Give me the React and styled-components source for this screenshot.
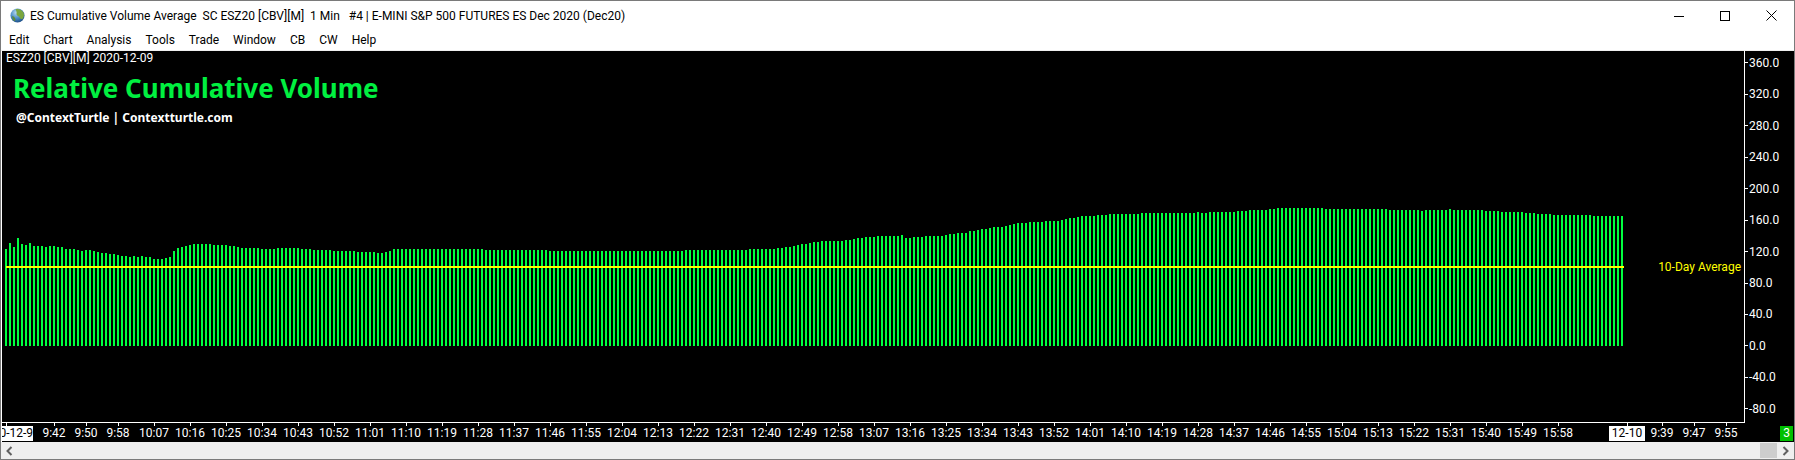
import React from "react";
import styled, { createGlobalStyle } from "styled-components";

const GlobalStyle = createGlobalStyle`
  body {
    margin: 0;
    background: #fff;
    overflow: hidden;
  }
`;

const UI_FONT = `Roboto, "Noto Sans", sans-serif`;
const BOLD_FONT = `"Noto Sans", "Open Sans", sans-serif`;

// bar tops in page pixels, one bar per minute, written as [count, top]
const TOP_RUNS = [
  [1, 249], [1, 243], [1, 247], [1, 238], [1, 244], [1, 245], [1, 243], [3, 246], [1, 247], [2, 246],
  [2, 247], [3, 249], [1, 250], [1, 251], [2, 250], [1, 251], [1, 252], [2, 253], [2, 254], [1, 255],
  [2, 256], [1, 257], [1, 256], [1, 257], [1, 256], [2, 257], [3, 259], [1, 258], [1, 257], [1, 251],
  [1, 248], [1, 247], [1, 246], [1, 245], [5, 244], [4, 245], [2, 246], [1, 247], [5, 248], [4, 249],
  [6, 248], [3, 249], [5, 250], [6, 251], [5, 252], [2, 253], [1, 252], [1, 251], [23, 249], [16, 250],
  [34, 251], [16, 250], [7, 249], [2, 248], [2, 247], [1, 246], [1, 245], [2, 244], [1, 243], [2, 242],
  [6, 241], [2, 240], [1, 239], [2, 238], [3, 237], [6, 236], [1, 235], [2, 238], [3, 237], [5, 236],
  [1, 235], [2, 234], [3, 233], [2, 231], [1, 230], [2, 229], [1, 228], [3, 227], [1, 226], [1, 225],
  [1, 224], [3, 223], [4, 222], [4, 221], [1, 220], [1, 219], [2, 218], [1, 217], [4, 216], [3, 215],
  [8, 214], [14, 213], [1, 212], [2, 213], [7, 212], [3, 211], [5, 210], [2, 209], [12, 208], [16, 209],
  [8, 210], [1, 211], [6, 210], [1, 209], [8, 210], [4, 211], [6, 212], [3, 213], [4, 214], [10, 215],
  [8, 216],
];

const BAR_TOPS = TOP_RUNS.flatMap(([count, top]) => Array(count).fill(top));

const MENU = ["Edit", "Chart", "Analysis", "Tools", "Trade", "Window", "CB", "CW", "Help"];
const Y_LABELS = ["360.0", "320.0", "280.0", "240.0", "200.0", "160.0", "120.0", "80.0", "40.0", "0.0", "-40.0", "-80.0"];

const minuteLabel = (minutes) => {
  const h = Math.floor(minutes / 60);
  const m = minutes % 60;
  return `${h}:${m < 10 ? "0" : ""}${m}`;
};

const timeTicks = [
  { label: "9:42", step: 21 },
  { label: "9:50", step: 32 },
  { label: "9:58", step: 32 },
];
for (let t = 10 * 60 + 7; t <= 15 * 60 + 58; t += 9) {
  timeTicks.push({ label: minuteLabel(t), step: 36 });
}
timeTicks.push({ label: "12-10", step: 69, date: true });
timeTicks.push({ label: "9:39", step: 35 });
timeTicks.push({ label: "9:47", step: 32 });
timeTicks.push({ label: "9:55", step: 32 });

const Globe = () => (
  <svg width="15" height="15" viewBox="0 0 16 16">
    <defs>
      <radialGradient id="sea" cx="0.4" cy="0.3" r="0.8">
        <stop offset="0" stopColor="#b5d8f0" />
        <stop offset="0.5" stopColor="#4a8cc4" />
        <stop offset="1" stopColor="#123f78" />
      </radialGradient>
    </defs>
    <circle cx="8" cy="8" r="7.5" fill="url(#sea)" />
    <path d="M6 1.2 C9 0.4 13 1.8 14.6 5.4 C15.4 8 14.6 10.5 13 12 C11.4 12 10.4 10.6 9.6 9 C8 8.4 6.6 7.4 7 5.6 C7.4 4 6.4 2.8 6 1.2 Z" fill="#7aa63e" />
    <path d="M2.2 8.4 C3.8 8.6 5.4 10 5.8 12 C5.8 13.2 5.2 14 4.6 14 C3.2 12.8 2.4 10.6 2.2 8.4 Z" fill="#5d8a3a" />
  </svg>
);

const MinimizeIcon = () => (
  <svg width="10" height="10" viewBox="0 0 10 10">
    <path d="M0 5.5 H10" stroke="#000" strokeWidth="1" />
  </svg>
);

const MaximizeIcon = () => (
  <svg width="10" height="10" viewBox="0 0 10 10">
    <rect x="0.5" y="0.5" width="9" height="9" fill="none" stroke="#000" strokeWidth="1" />
  </svg>
);

const CloseIcon = () => (
  <svg width="11" height="11" viewBox="0 0 11 11">
    <path d="M0.5 0.5 L10.5 10.5 M10.5 0.5 L0.5 10.5" stroke="#000" strokeWidth="1" fill="none" />
  </svg>
);

const BarChart = () => (
  <Plot width="1742" height="371" viewBox="0 0 1742 371" shapeRendering="crispEdges">
    {BAR_TOPS.map((top, i) => (
      <rect key={i} x={3 + i * 4} y={top - 51} width="2" height={346 - top} fill="#00ff40" />
    ))}
    <rect x="4" y="215" width="1618" height="2" fill="#ffff00" />
  </Plot>
);

const App = () => {
  return (
    <>
      <GlobalStyle />
      <Window>
        <TitleBar>
          <Globe />
          <TitleText>
            {"ES Cumulative Volume Average  SC ESZ20 [CBV][M]  1 Min   #4 | E-MINI S&P 500 FUTURES ES Dec 2020 (Dec20)"}
          </TitleText>
          <WindowButtons>
            <WindowButton><MinimizeIcon /></WindowButton>
            <WindowButton><MaximizeIcon /></WindowButton>
            <WindowButton><CloseIcon /></WindowButton>
          </WindowButtons>
        </TitleBar>

        <MenuBar>
          {MENU.map((item) => (
            <MenuItem key={item}>{item}</MenuItem>
          ))}
        </MenuBar>

        <Chart>
          <PlotRow>
            <PlotArea>
              <BarChart />
              <ChartHeader>
                <SymbolLine>ESZ20 [CBV][M] 2020-12-09</SymbolLine>
                <ChartTitle>Relative Cumulative Volume</ChartTitle>
                <ChartCredit>@ContextTurtle | Contextturtle.com</ChartCredit>
              </ChartHeader>
              <AverageLabel>10-Day Average</AverageLabel>
            </PlotArea>
            <YAxis>
              <YAxisInner>
                {Y_LABELS.map((label, i) => (
                  <YRow key={label}>
                    <YTick />
                    <YLabel $clipped={i === 0}>{label}</YLabel>
                  </YRow>
                ))}
              </YAxisInner>
            </YAxis>
          </PlotRow>

          <BottomRow>
            <TimeAxis>
              <FirstDate>
                <FirstDateTick />
                <FirstDateText>2020-12-9</FirstDateText>
              </FirstDate>
              {timeTicks.map((tick) => (
                <TimeTick key={tick.label} $step={tick.step}>
                  <TickMark />
                  <TickLabel $date={tick.date}>{tick.label}</TickLabel>
                </TimeTick>
              ))}
            </TimeAxis>
            <Badge>3</Badge>
          </BottomRow>
        </Chart>

        <ScrollBar>
          <ScrollArrow>
            <svg width="7" height="10" viewBox="0 0 7 10">
              <path d="M5.5 1 L1.5 5 L5.5 9" fill="none" stroke="#606060" strokeWidth="2" />
            </svg>
          </ScrollArrow>
          <ScrollThumb />
          <ScrollArrow>
            <svg width="7" height="10" viewBox="0 0 7 10">
              <path d="M1.5 1 L5.5 5 L1.5 9" fill="none" stroke="#606060" strokeWidth="2" />
            </svg>
          </ScrollArrow>
        </ScrollBar>
      </Window>
    </>
  );
};

const Window = styled.div`
  width: 1795px;
  height: 460px;
  box-sizing: border-box;
  border: 1px solid #7a7a7a;
  display: flex;
  flex-direction: column;
  background: #fff;
  font-family: ${UI_FONT};
  overflow: hidden;
`;

const TitleBar = styled.div`
  height: 26px;
  flex: none;
  box-sizing: border-box;
  padding: 3px 0 0 9px;
  display: flex;
  align-items: center;
`;

const TitleText = styled.div`
  margin-left: 5px;
  font-size: 12px;
  color: #000;
  white-space: pre;
`;

const WindowButtons = styled.div`
  margin-left: auto;
  display: flex;
  height: 100%;
`;

const WindowButton = styled.div`
  width: 46px;
  display: flex;
  align-items: center;
  justify-content: center;
`;

const MenuBar = styled.div`
  height: 24px;
  flex: none;
  box-sizing: border-box;
  border-bottom: 1px solid #f0f0f0;
  padding: 3px 0 0 1px;
  display: flex;
  align-items: center;
`;

const MenuItem = styled.div`
  padding: 0 7px;
  font-size: 12px;
  color: #000;
`;

const Chart = styled.div`
  height: 391px;
  flex: none;
  box-sizing: border-box;
  border-left: 1px solid #fff;
  background: #000;
  display: flex;
  flex-direction: column;
`;

const PlotRow = styled.div`
  height: 371px;
  flex: none;
  display: flex;
`;

const PlotArea = styled.div`
  width: 1742px;
  flex: none;
  position: relative;
`;

const Plot = styled.svg`
  position: absolute;
  inset: 0;
`;

const ChartHeader = styled.div`
  position: absolute;
  left: 4px;
  top: 0;
  display: flex;
  flex-direction: column;
  align-items: flex-start;
`;

const SymbolLine = styled.div`
  font-size: 12px;
  line-height: 14px;
  color: #fff;
  white-space: nowrap;
`;

const ChartTitle = styled.div`
  margin: 5px 0 0 7px;
  font-family: ${BOLD_FONT};
  font-size: 26px;
  line-height: 36px;
  font-weight: 700;
  color: #00f040;
  white-space: nowrap;
`;

const ChartCredit = styled.div`
  margin: 3px 0 0 10px;
  font-family: ${BOLD_FONT};
  font-size: 12px;
  line-height: 17px;
  font-weight: 700;
  color: #fff;
  white-space: nowrap;
`;

const AverageLabel = styled.div`
  position: absolute;
  right: 3px;
  top: 208px;
  font-size: 12px;
  line-height: 16px;
  color: #ffff00;
  white-space: nowrap;
`;

const YAxis = styled.div`
  flex: 1;
  border-left: 1px solid #fff;
  overflow: hidden;
`;

const YAxisInner = styled.div`
  margin-top: -4px;
  display: flex;
  flex-direction: column;
`;

const YRow = styled.div`
  height: 31.47px;
  flex: none;
  display: flex;
  align-items: center;
`;

const YTick = styled.div`
  width: 3px;
  height: 1px;
  background: #fff;
  flex: none;
`;

const YLabel = styled.div`
  margin-left: 1px;
  font-size: 12px;
  line-height: 16px;
  color: #fff;
  ${(p) => p.$clipped && "clip-path: inset(3px 0 0 0);"}
`;

const BottomRow = styled.div`
  height: 20px;
  flex: none;
  display: flex;
`;

const TimeAxis = styled.div`
  width: 1743px;
  flex: none;
  box-sizing: border-box;
  border-top: 1px solid #fff;
  display: flex;
`;

const FirstDate = styled.div`
  width: 31px;
  flex: none;
  height: 18px;
  position: relative;
  overflow: hidden;
`;

const FirstDateTick = styled.div`
  position: absolute;
  left: 4px;
  top: 0;
  width: 1px;
  height: 3px;
  background: #fff;
`;

const FirstDateText = styled.div`
  position: absolute;
  right: 0;
  top: 3px;
  width: 31px;
  height: 15px;
  background: #fff;
  color: #000;
  font-size: 12px;
  line-height: 15px;
  display: flex;
  justify-content: flex-end;
  white-space: nowrap;
`;

const TimeTick = styled.div`
  width: 0;
  flex: none;
  margin-left: ${(p) => p.$step}px;
  display: flex;
  flex-direction: column;
  align-items: center;
`;

const TickMark = styled.div`
  width: 1px;
  height: 3px;
  flex: none;
  background: #fff;
`;

const TickLabel = styled.div`
  font-size: 12px;
  line-height: 15px;
  padding: 0 3px;
  white-space: nowrap;
  color: ${(p) => (p.$date ? "#000" : "#fff")};
  background: ${(p) => (p.$date ? "#fff" : "transparent")};
`;

const Badge = styled.div`
  margin: 4px 1px 1px auto;
  width: 13px;
  background: #00c000;
  color: #fff;
  font-size: 12px;
  line-height: 15px;
  text-align: center;
`;

const ScrollBar = styled.div`
  flex: 1;
  background: #efefef;
  display: flex;
  align-items: center;
`;

const ScrollArrow = styled.div`
  width: 17px;
  height: 100%;
  display: flex;
  align-items: center;
  justify-content: center;
  flex: none;
`;

const ScrollThumb = styled.div`
  width: 17px;
  height: 15px;
  background: #cdcdcd;
  margin-left: auto;
`;

export default App;
